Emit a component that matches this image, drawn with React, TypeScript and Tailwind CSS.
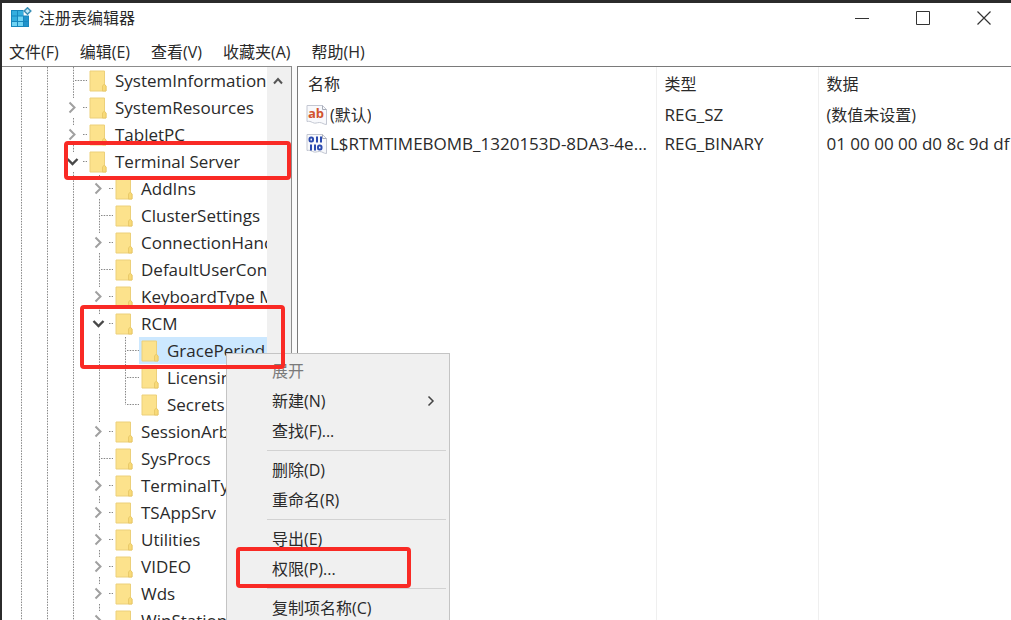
import { useState } from "react";

interface TreeNode {
  name: string;
  depth: number;
  state: "leaf" | "closed" | "open";
  last?: boolean;
}

interface RegistryValue {
  name: string;
  type: string;
  data: string;
  kind: "string" | "binary";
}

const nodes: TreeNode[] = [
  { name: "SystemInformation", depth: 0, state: "leaf" },
  { name: "SystemResources", depth: 0, state: "closed" },
  { name: "TabletPC", depth: 0, state: "closed" },
  { name: "Terminal Server", depth: 0, state: "open" },
  { name: "AddIns", depth: 1, state: "closed" },
  { name: "ClusterSettings", depth: 1, state: "leaf" },
  { name: "ConnectionHandler", depth: 1, state: "closed" },
  { name: "DefaultUserConfiguration", depth: 1, state: "leaf" },
  { name: "KeyboardType Mapping", depth: 1, state: "closed" },
  { name: "RCM", depth: 1, state: "open" },
  { name: "GracePeriod", depth: 2, state: "leaf" },
  { name: "Licensing Core", depth: 2, state: "leaf" },
  { name: "Secrets", depth: 2, state: "leaf", last: true },
  { name: "SessionArbitrationHelper", depth: 1, state: "closed" },
  { name: "SysProcs", depth: 1, state: "leaf" },
  { name: "TerminalTypes", depth: 1, state: "closed" },
  { name: "TSAppSrv", depth: 1, state: "closed" },
  { name: "Utilities", depth: 1, state: "closed" },
  { name: "VIDEO", depth: 1, state: "closed" },
  { name: "Wds", depth: 1, state: "closed" },
  { name: "WinStations", depth: 1, state: "closed" },
];

const values: RegistryValue[] = [
  { name: "(默认)", type: "REG_SZ", data: "(数值未设置)", kind: "string" },
  {
    name: "L$RTMTIMEBOMB_1320153D-8DA3-4e8e-B27B-0D888223A588",
    type: "REG_BINARY",
    data: "01 00 00 00 d0 8c 9d df 01 15 d1 11",
    kind: "binary",
  },
];

const menus = ["文件(F)", "编辑(E)", "查看(V)", "收藏夹(A)", "帮助(H)"];

const contextGroups = [
  ["展开", "新建(N)", "查找(F)..."],
  ["删除(D)", "重命名(R)"],
  ["导出(E)", "权限(P)..."],
  ["复制项名称(C)"],
];

function RegeditIcon() {
  return (
    <svg width="22" height="22" viewBox="0 0 22 22" aria-hidden="true">
      <path d="M1 3h12.500v5.500H19V20H1z" fill="#1787bd" />
      <g fill="#35aede">
        <rect x="2" y="4" width="5" height="4.500" />
        <rect x="8" y="4" width="5" height="4.500" />
        <rect x="2" y="9.500" width="5" height="4.500" />
      </g>
      <g fill="#6fd3f3">
        <rect x="8" y="9.500" width="5" height="4.500" />
        <rect x="2" y="15" width="5" height="4" />
        <rect x="8" y="15" width="5" height="4" />
      </g>
      <rect x="14" y="9.500" width="4" height="4.500" fill="#2093cc" />
      <rect x="14" y="15" width="4" height="4" fill="#2093cc" />
      <path d="M17.500 0.800 20.800 4l-3.300 3.200L14.200 4z" fill="#bfe6f5" stroke="#3a8fb5" strokeWidth="1.500" />
    </svg>
  );
}

function FolderIcon() {
  return (
    <svg width="18" height="22" viewBox="0 0 18 22" className="shrink-0" aria-hidden="true">
      <path d="M1 1h14.500v13.500l1.500 1.500v5H1z" fill="#fce28c" stroke="#ecd07a" />
      <path d="M13.500 21v-5l1.800-2 1.700 2v5z" fill="#f8da78" stroke="#e6c564" strokeWidth="0.800" />
    </svg>
  );
}

// Vertical guide that runs past an ancestor level
function Guide() {
  return (
    <svg width="26" height="27" className="shrink-0" aria-hidden="true">
      <path d="M12.500 0v27" stroke="#888" strokeDasharray="1.500 1.200" />
    </svg>
  );
}

function Branch({ node }: { node: TreeNode }) {
  if (node.state === "leaf") {
    return (
      <svg width="26" height="27" className="shrink-0" aria-hidden="true">
        <path
          d={node.last ? "M12.500 0v14M14 13.500h12" : "M12.500 0v27M14 13.500h12"}
          stroke="#888"
          strokeDasharray="1.500 1.200"
        />
      </svg>
    );
  }
  const open = node.state === "open";
  return (
    <button type="button" className="shrink-0" aria-label={node.name} aria-expanded={open}>
      <svg width="26" height="27" aria-hidden="true">
        <path d="M12.500 0v4M12.500 24v3M22 13.500h4" stroke="#888" strokeDasharray="1.500 1.200" />
        {open ? (
          <path d="M6.500 11l5 5 5-5" fill="none" stroke="#484848" strokeWidth="2.400" />
        ) : (
          <path d="M8.500 8.500l5 5-5 5" fill="none" stroke="#a0a0a0" strokeWidth="2" />
        )}
      </svg>
    </button>
  );
}

function ValueIcon({ kind }: { kind: RegistryValue["kind"] }) {
  return (
    <svg width="22" height="22" viewBox="0 0 22 22" className="shrink-0" aria-hidden="true">
      <path
        d="M1 1.500h15.500l4 4V20.500c-3 0-4-2-7-2s-4 1.500-7 0c-2-1-3-1.500-5.500-1z"
        fill="#f8f9fc"
        stroke="#c3c7d2"
      />
      <path d="M16.500 1.500v4h4" fill="none" stroke="#a9adb8" />
      {kind === "string" ? (
        <text x="2" y="14" fontSize="13" fontWeight="700" fill="#d2532e">
          ab
        </text>
      ) : (
        <g fill="none" stroke="#2b4bb0" strokeWidth="2">
          <rect x="3.500" y="4.500" width="3.500" height="4" rx="1.500" />
          <path d="M11 3.500v6M15 3.500v6M5 11.500v6M9 11.500v6" />
          <rect x="12" y="12.500" width="3.500" height="4" rx="1.500" />
        </g>
      )}
    </svg>
  );
}

function TitleBar() {
  return (
    <header className="flex h-[30px] shrink-0 items-center pl-2 pr-5">
      <RegeditIcon />
      <h1 className="ml-[7px] flex-1">注册表编辑器</h1>
      <div className="flex gap-[47px]">
        <button type="button" aria-label="最小化">
          <svg width="14" height="14" stroke="#333" fill="none">
            <path d="M0 7.500h14" />
          </svg>
        </button>
        <button type="button" aria-label="最大化">
          <svg width="14" height="14" stroke="#333" fill="none">
            <path d="M0.500 0.500h13v13h-13z" />
          </svg>
        </button>
        <button type="button" aria-label="关闭">
          <svg width="14" height="14" stroke="#333" fill="none" strokeWidth="1.200">
            <path d="M0.500 0.500l13 13M13.500 0.500l-13 13" />
          </svg>
        </button>
      </div>
    </header>
  );
}

function KeyTree() {
  const [selected, setSelected] = useState<string>("GracePeriod");

  return (
    <section className="flex w-[290px] shrink-0 overflow-hidden border-r border-t border-[#8c8c8c]">
      <ul className="min-w-0 flex-1 overflow-hidden pl-[7px] text-[17px]">
        {nodes.map((node) => (
          <li key={node.name} className="flex h-[27px]">
            <Guide />
            <Guide />
            {node.depth > 0 && <Guide />}
            {node.depth > 1 && <Guide />}
            <Branch node={node} />
            <button
              type="button"
              onClick={() => setSelected(node.name)}
              className={
                selected === node.name
                  ? "flex min-w-0 flex-1 items-center gap-2 overflow-hidden bg-[#cce8ff] pl-0.5 whitespace-nowrap"
                  : "flex min-w-0 items-center gap-2 overflow-hidden pl-0.5 whitespace-nowrap"
              }
            >
              <FolderIcon />
              {node.name}
            </button>
          </li>
        ))}
      </ul>
      <div className="w-6 shrink-0 bg-[#f0f0f0]">
        <button type="button" aria-label="向上滚动" className="flex h-7 w-full items-center pl-1.5">
          <svg width="10" height="8" viewBox="0 0 10 8">
            <path d="M1 6.500l4-4.500 4 4.500" fill="none" stroke="#555" strokeWidth="2" />
          </svg>
        </button>
      </div>
    </section>
  );
}

function ValueList() {
  return (
    <section className="min-w-0 flex-1 overflow-hidden border-l border-t border-[#7a7a7a] bg-white">
      <table className="h-full w-full table-fixed text-left">
        <thead>
          <tr className="h-[33px]">
            <th className="w-[358px] border-r border-[#efefef] pl-2.5 font-normal">名称</th>
            <th className="w-[162px] border-r border-[#efefef] pl-2 font-normal">类型</th>
            <th className="pl-2 font-normal">数据</th>
          </tr>
        </thead>
        <tbody>
          {values.map((value) => (
            <tr key={value.name} className={value.kind === "binary" ? "h-[29px] text-[17px]" : "h-[29px]"}>
              <td className="border-r border-[#efefef] pl-2 pr-1">
                <div className="flex items-center gap-0.5">
                  <ValueIcon kind={value.kind} />
                  <span className="truncate">{value.name}</span>
                </div>
              </td>
              <td className="border-r border-[#efefef] pl-2 text-[17px]">{value.type}</td>
              <td className="overflow-hidden pl-2 whitespace-nowrap">{value.data}</td>
            </tr>
          ))}
          <tr>
            <td className="border-r border-[#efefef]"></td>
            <td className="border-r border-[#efefef]"></td>
            <td></td>
          </tr>
        </tbody>
      </table>
    </section>
  );
}

function ContextMenu() {
  return (
    <div
      role="menu"
      className="absolute left-[226px] top-[353px] w-[224px] border border-[#c4c4c4] bg-[#f0f0f0] py-0.5"
    >
      {contextGroups.map((group, index) => (
        <div key={group[0]}>
          {index > 0 && <div className="my-1 ml-10 mr-[3px] h-px bg-[#d2d2d2]"></div>}
          {group.map((item) => (
            <button
              key={item}
              type="button"
              role="menuitem"
              disabled={item === "展开"}
              className="flex h-[30px] w-full items-center justify-between pl-[45px] pr-3.5 disabled:text-[#7a7a7a]"
            >
              {item}
              {item === "新建(N)" && (
                <svg width="8" height="12" viewBox="0 0 8 12" aria-hidden="true">
                  <path d="M1.500 1.500L6 6l-4.500 4.500" fill="none" stroke="#444" strokeWidth="1.500" />
                </svg>
              )}
            </button>
          ))}
        </div>
      ))}
    </div>
  );
}

function App() {
  return (
    <div
      lang="zh-CN"
      className="relative flex h-screen flex-col overflow-hidden border-l-2 border-t-[3px] border-[#2b2b2b] bg-white font-['Open_Sans','Noto_Sans_CJK_SC',sans-serif] text-base leading-6 text-[#2a2a2a]"
    >
      <TitleBar />
      <nav className="flex h-[33px] shrink-0 items-center gap-[21px] pl-[7px] pt-1">
        {menus.map((menu) => (
          <button key={menu} type="button">
            {menu}
          </button>
        ))}
      </nav>
      <main className="flex min-h-0 flex-1 gap-[5px] bg-[#fafafa]">
        <div className="flex bg-white">
          <KeyTree />
        </div>
        <ValueList />
      </main>
      <div className="absolute -left-0.5 -top-[3px]">
        <ContextMenu />
        {/* highlight frames */}
        <div className="pointer-events-none absolute left-16 top-[141px] h-[39px] w-[227px] rounded border-4 border-[#f92a25]"></div>
        <div className="pointer-events-none absolute left-20 top-[305px] h-16 w-[205px] rounded border-4 border-[#f92a25]"></div>
        <div className="pointer-events-none absolute left-[236px] top-[547px] h-[41px] w-[175px] rounded border-4 border-[#f92a25]"></div>
      </div>
    </div>
  );
}

export default App;
